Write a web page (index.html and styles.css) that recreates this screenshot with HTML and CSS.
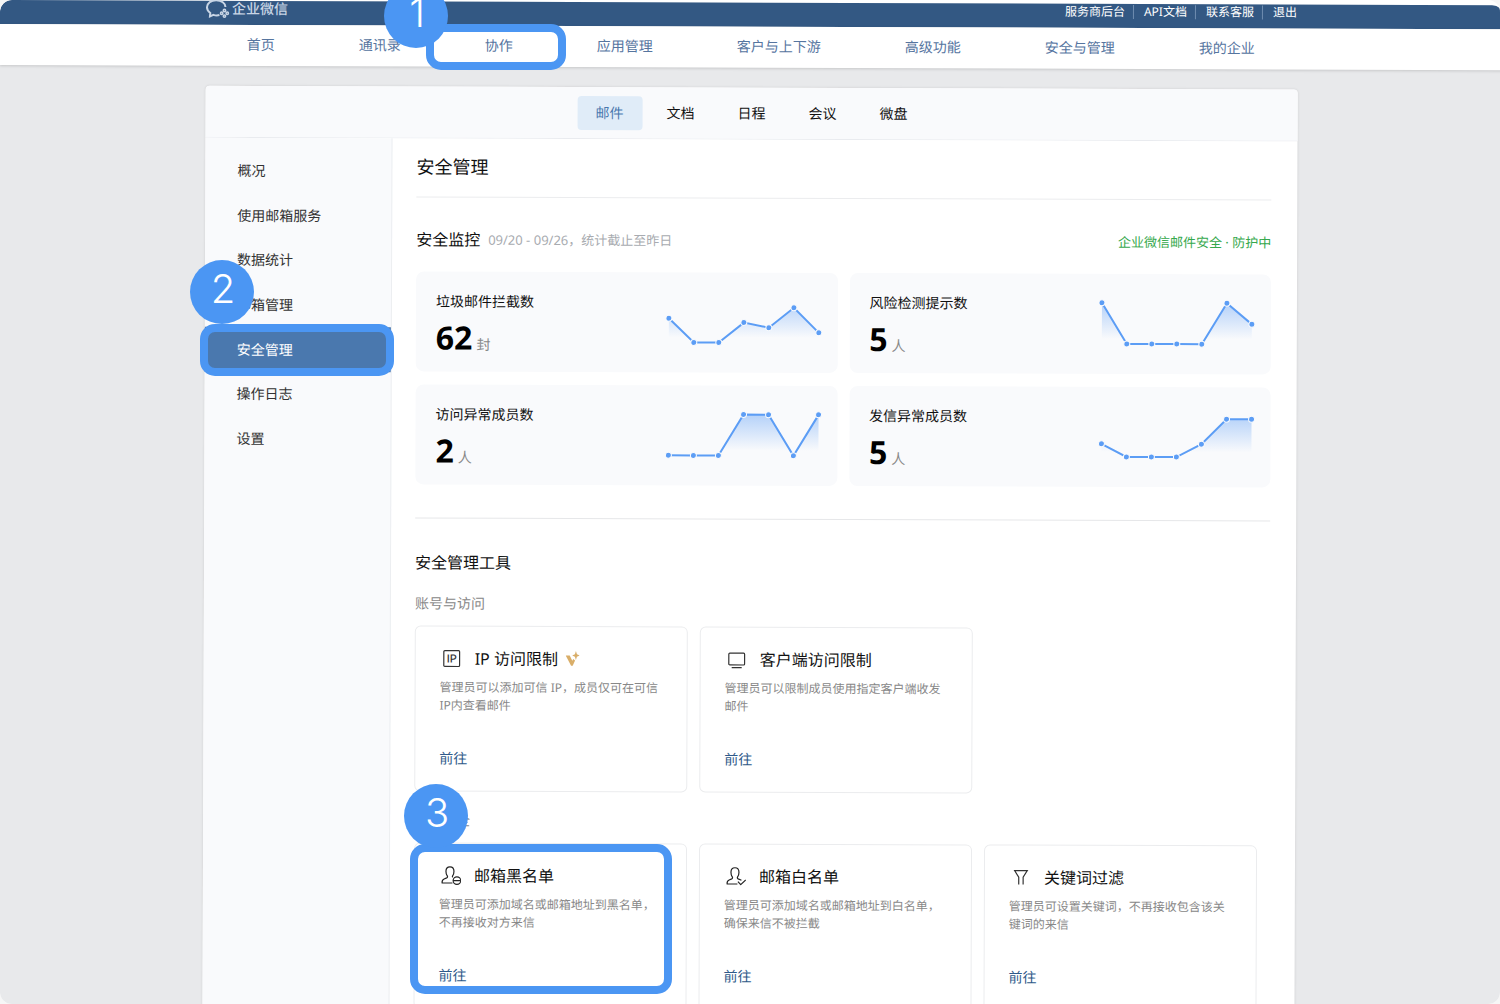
FILE: index.html
```html
<!DOCTYPE html>
<html lang="zh-CN">
<head>
<meta charset="utf-8">
<meta name="viewport" content="width=device-width, initial-scale=1">
<title>企业微信 - 安全管理</title>
<link rel="stylesheet" href="styles.css">
</head>
<body>
<div class="stage">
  <div class="screen">
    <header class="topbar">
      <div class="wrap topbar-inner">
        <a class="logo" href="#">
          <svg width="24" height="20" viewBox="0 0 24 20" fill="none" stroke="currentColor" stroke-width="2" aria-hidden="true">
            <path d="M13.500 16.300c-2.300.6-4.300.4-6-.2L4 17.600l.3-3.300C2.200 12.700 1 10.700 1 8.500 1 4.500 5 1.500 10.200 1.500s9.300 3 9.300 6.800"/>
            <g stroke-width="1.500"><circle cx="18.500" cy="11.700" r="1.200"/><circle cx="15.700" cy="14.500" r="1.200"/><circle cx="21.300" cy="14.500" r="1.200"/><circle cx="18.500" cy="17.300" r="1.200"/></g>
          </svg>
          <span>企业微信</span>
        </a>
        <nav class="toplinks">
          <a href="#">服务商后台</a>
          <a href="#">API文档</a>
          <a href="#">联系客服</a>
          <a href="#">退出</a>
        </nav>
      </div>
    </header>
    <nav class="mainnav">
      <div class="wrap mainnav-inner">
        <a href="#">首页</a>
        <a href="#">通讯录</a>
        <a href="#">协作</a>
        <a href="#">应用管理</a>
        <a href="#">客户与上下游</a>
        <a href="#">高级功能</a>
        <a href="#">安全与管理</a>
        <a href="#">我的企业</a>
      </div>
    </nav>

    <div class="wrap panel">
      <nav class="tabs">
        <a class="tab active" href="#">邮件</a>
        <a class="tab" href="#">文档</a>
        <a class="tab" href="#">日程</a>
        <a class="tab" href="#">会议</a>
        <a class="tab" href="#">微盘</a>
      </nav>
      <div class="body">
        <aside class="sidebar">
          <nav class="menu">
            <a href="#">概况</a>
            <a href="#">使用邮箱服务</a>
            <a href="#">数据统计</a>
            <a href="#">邮箱管理</a>
            <a class="active" href="#">安全管理</a>
            <a href="#">操作日志</a>
            <a href="#">设置</a>
          </nav>
        </aside>
        <main class="content">
          <h1>安全管理</h1>

          <section class="monitor">
            <div class="section-head">
              <h2>安全监控</h2>
              <span class="period">09/20 - 09/26，统计截止至昨日</span>
              <span class="guard">企业微信邮件安全 · 防护中</span>
            </div>
            <svg class="defs" width="0" height="0" aria-hidden="true">
              <defs>
                <linearGradient id="fade" gradientUnits="userSpaceOnUse" x1="0" y1="4" x2="0" y2="41">
                  <stop offset="0" stop-color="#5c9df5" stop-opacity=".45"/>
                  <stop offset="1" stop-color="#5c9df5" stop-opacity="0"/>
                </linearGradient>
                <marker id="dot" viewBox="0 0 8 8" refX="4" refY="4" markerWidth="8" markerHeight="8" markerUnits="userSpaceOnUse">
                  <circle cx="4" cy="4" r="3" fill="#5c9df5" stroke="#f9fafc" stroke-width="1"/>
                </marker>
              </defs>
            </svg>
            <div class="stats">
              <article class="stat">
                <div>
                  <h3>垃圾邮件拦截数</h3>
                  <p><strong>62</strong><span>封</span></p>
                </div>
                <svg class="chart" width="160" height="56" viewBox="0 0 160 56">
                  <path class="area" d="M5 22L30 46H55L80 26L105 31L130 11L155 36V46H5Z"/>
                  <polyline class="line" points="5,22 30,46 55,46 80,26 105,31 130,11 155,36"/>
                </svg>
              </article>
              <article class="stat">
                <div>
                  <h3>风险检测提示数</h3>
                  <p><strong>5</strong><span>人</span></p>
                </div>
                <svg class="chart" width="160" height="56" viewBox="0 0 160 56">
                  <path class="area" d="M5 5L30 46H105L130 5L155 26V46H5Z"/>
                  <polyline class="line" points="5,5 30,46 55,46 80,46 105,46 130,5 155,26"/>
                </svg>
              </article>
              <article class="stat">
                <div>
                  <h3>访问异常成员数</h3>
                  <p><strong>2</strong><span>人</span></p>
                </div>
                <svg class="chart" width="160" height="56" viewBox="0 0 160 56">
                  <path class="area" d="M5 46H55L80 5H105L130 46L155 5V46Z"/>
                  <polyline class="line" points="5,46 30,46 55,46 80,5 105,5 130,46 155,5"/>
                </svg>
              </article>
              <article class="stat">
                <div>
                  <h3>发信异常成员数</h3>
                  <p><strong>5</strong><span>人</span></p>
                </div>
                <svg class="chart" width="160" height="56" viewBox="0 0 160 56">
                  <path class="area" d="M5 33L30 46H80L105 33L130 8H155V46H5Z"/>
                  <polyline class="line" points="5,33 30,46 55,46 80,46 105,33 130,8 155,8"/>
                </svg>
              </article>
            </div>
          </section>

          <section class="toolbox">
            <h2>安全管理工具</h2>
            <h3 class="group">账号与访问</h3>
            <div class="tools">
              <article class="tool">
                <h4>
                  <svg width="20" height="20" viewBox="0 0 20 20" fill="none" stroke="#333" stroke-width="1.200" aria-hidden="true">
                    <rect x="2.100" y="2.100" width="15.800" height="15.800" rx="1"/>
                    <text class="ip" x="10" y="14" text-anchor="middle">IP</text>
                  </svg>
                  <span>IP 访问限制</span>
                  <svg class="spark" width="14" height="16" viewBox="0 0 14 16" fill="#d9ae69" aria-hidden="true">
                    <path d="M0 4.500h4l2.600 5.300.9-1.800 1.900 1.500L7 14.800H5.400Z"/>
                    <path d="M10.200 0l1 3.200L14 4.500l-2.800 1.300-1 3.200-1-3.200-2.700-1.300 2.700-1.300Z"/>
                  </svg>
                </h4>
                <p>管理员可以添加可信 IP，成员仅可在可信IP内查看邮件</p>
                <a href="#">前往</a>
              </article>
              <article class="tool">
                <h4>
                  <svg width="20" height="20" viewBox="0 0 20 20" fill="none" stroke="#333" stroke-width="1.200" aria-hidden="true">
                    <rect x="2.100" y="3.600" width="15.800" height="11.800" rx="1"/>
                    <path d="M5 18h10"/>
                  </svg>
                  <span>客户端访问限制</span>
                </h4>
                <p>管理员可以限制成员使用指定客户端收发邮件</p>
                <a href="#">前往</a>
              </article>
            </div>
            <h3 class="group">邮件安全</h3>
            <div class="tools">
              <article class="tool">
                <h4>
                  <svg width="20" height="20" viewBox="0 0 20 20" fill="none" stroke="#222" stroke-width="1.200" stroke-linejoin="round" aria-hidden="true">
                    <path d="M11.500 17.400H1.200c-.3-2.300.5-3.300 2-4l2.600-1.100c1-.5 1-1.300.4-2.200C5.300 8.800 5 7.300 5 5.700 5 3 6.600 1.200 9 1.200S13 3 13 5.700c0 1.600-.3 3.100-1.200 4.400-.5.7-.5 1.200-.1 1.700"/>
                    <circle cx="16" cy="15" r="3.800"/><path d="M12.200 15h7.600"/>
                  </svg>
                  <span>邮箱黑名单</span>
                </h4>
                <p>管理员可添加域名或邮箱地址到黑名单，不再接收对方来信</p>
                <a href="#">前往</a>
              </article>
              <article class="tool">
                <h4>
                  <svg width="20" height="20" viewBox="0 0 20 20" fill="none" stroke="#222" stroke-width="1.200" stroke-linejoin="round" aria-hidden="true">
                    <path d="M11.500 17.400H1.200c-.3-2.300.5-3.300 2-4l2.600-1.100c1-.5 1-1.300.4-2.200C5.300 8.800 5 7.300 5 5.700 5 3 6.600 1.200 9 1.200S13 3 13 5.700c0 1.600-.3 3.100-1.200 4.400-.6.900-.6 1.700.4 2.200l3.300 1.400"/>
                    <path d="M12 15l2.800 3 5-4.700"/>
                  </svg>
                  <span>邮箱白名单</span>
                </h4>
                <p>管理员可添加域名或邮箱地址到白名单，确保来信不被拦截</p>
                <a href="#">前往</a>
              </article>
              <article class="tool">
                <h4>
                  <svg width="20" height="20" viewBox="0 0 20 20" fill="none" stroke="#333" stroke-width="1.200" aria-hidden="true">
                    <path d="M7.800 17V9.700L3.700 3.100h12.600l-4.100 6.600V17"/>
                  </svg>
                  <span>关键词过滤</span>
                </h4>
                <p>管理员可设置关键词，不再接收包含该关键词的来信</p>
                <a href="#">前往</a>
              </article>
            </div>
          </section>
        </main>
      </div>
    </div>
  </div>

  <div class="frame frame-1"></div>
  <div class="frame frame-2"></div>
  <div class="frame frame-3"></div>
  <div class="step step-1">1</div>
  <div class="step step-2">2</div>
  <div class="step step-3">3</div>
</div>
</body>
</html>
```
FILE: styles.css
```css
* { box-sizing: border-box; }

body, h1, h2, h3, h4, p { margin: 0; font-weight: 400; }

body {
  background: #f6f6f6;
  color: #111;
  font: 14px/20px "Noto Sans", "Noto Sans CJK SC", sans-serif;
}

a { color: inherit; text-decoration: none; }

.stage {
  position: relative;
  height: 100vh;
  overflow: hidden;
  border-radius: 12px;
  background: #fff;
}

/* the console sits slightly tilted under the step markers */
.screen {
  min-height: 100%;
  margin-right: -4px;
  border-radius: 12px 12px 0 0;
  background: #e8e9eb;
  transform: rotate(0.2deg);
  transform-origin: 0 0;
}

.wrap { max-width: 1092px; margin: 0 auto; }

.topbar {
  height: 24px;
  border-radius: 12px 12px 0 0;
  background: #335883;
}

.topbar-inner {
  display: flex;
  align-items: center;
  justify-content: space-between;
  height: 16px;
}

.logo {
  display: flex;
  align-items: center;
  gap: 2px;
  color: #c8d5e5;
  font-weight: 500;
}

.toplinks {
  display: flex;
  padding-right: 1px;
  color: #fff;
  font-size: 12px;
  line-height: 14px;
}
.toplinks a + a {
  margin-left: 8px;
  padding-left: 10px;
  border-left: 1px solid #6f8db0;
}

.mainnav {
  background: #fff;
  box-shadow: 0 1px 3px rgba(0, 0, 0, .15);
}

.mainnav-inner {
  display: flex;
  gap: 84px;
  padding: 0 41px 1px;
  color: #56759f;
  line-height: 40px;
  white-space: nowrap;
}

.panel {
  margin-top: 20px;
  border-radius: 4px 4px 0 0;
  background: #fff;
  box-shadow: 0 0 3px rgba(0, 0, 0, .12);
}

.tabs {
  display: flex;
  align-items: center;
  justify-content: center;
  gap: 6px;
  height: 52px;
  border-bottom: 1px solid #e9ebef;
  border-radius: 4px 4px 0 0;
  background: #f9fafc;
}

.tab {
  width: 65px;
  border-radius: 4px;
  line-height: 34px;
  text-align: center;
}
.tab.active { background: #e0ecf8; color: #4a78ae; }

.body { display: grid; grid-template-columns: 187px 1fr; }

.sidebar {
  padding-top: 11px;
  border-right: 1px solid #eceef1;
  background: #f9fafc;
  color: #333;
}

.menu { display: flex; flex-direction: column; height: 312px; }
.menu a {
  display: flex;
  flex: 1;
  align-items: center;
  padding-left: 32px;
}
.menu .active { background: #4a78ae; color: #fff; }

.content { padding: 16px 26px 40px 24px; }

h1 {
  padding-bottom: 18px;
  border-bottom: 1px solid #ebecee;
  font-size: 18px;
  line-height: 24px;
}

h2 { font-size: 16px; line-height: 24px; }

.monitor {
  padding: 30px 0 33px;
  border-bottom: 1px solid #e6e7e9;
}

.section-head {
  display: flex;
  align-items: center;
  gap: 8px;
  margin-bottom: 20px;
}

.period { color: #a8abb0; font-size: 13px; }
.guard { margin-left: auto; color: #35a84c; font-size: 13px; }

.defs { position: absolute; }

.stats {
  display: grid;
  grid-template-columns: 1fr 1fr;
  gap: 13px 12px;
}

.stat {
  display: flex;
  justify-content: space-between;
  height: 100px;
  padding: 20px 14px 0 20px;
  border-radius: 8px;
  background: #f9fafc;
}

.stat h3 { font-size: 14px; line-height: 20px; }
.stat p { display: flex; align-items: baseline; gap: 4px; line-height: 52px; }
.stat strong { color: #000; font-size: 32px; }
.stat span { color: #888; }

.chart { margin-top: 4px; }
.area { fill: url(#fade); }
.line {
  fill: none;
  stroke: #5c9df5;
  stroke-width: 2;
  marker-start: url(#dot);
  marker-mid: url(#dot);
  marker-end: url(#dot);
}

.toolbox { padding-top: 32px; }

.group {
  margin: 19px 0 12px;
  color: #888;
  font-size: 14px;
  line-height: 20px;
}

.tools {
  display: grid;
  grid-template-columns: repeat(3, 1fr);
  gap: 12px;
  padding-right: 12px;
}

.tool {
  display: flex;
  flex-direction: column;
  height: 166px;
  padding: 20px 24px 22px;
  border: 1px solid #ebecee;
  border-radius: 6px;
}

.tool h4 {
  display: flex;
  align-items: center;
  padding-left: 2px;
  font-size: 16px;
  line-height: 24px;
}
.tool h4 span { margin-left: 13px; }
.tool .spark { margin-left: 8px; }
.tool p { margin-top: 8px; color: #888; font-size: 12px; line-height: 18px; }
.tool a { margin-top: auto; color: #2f5a8a; }

.ip {
  fill: #333;
  stroke: none;
  font: 500 11px Inter, sans-serif;
}

/* numbered step markers laid over the console */
.frame {
  position: absolute;
  border: 8px solid #4b96f3;
  border-radius: 15px;
}
.frame-1 { left: 426px; top: 24px; width: 140px; height: 46px; }
.frame-2 { left: 200px; top: 324px; width: 194px; height: 52px; }
.frame-3 { left: 410px; top: 844px; width: 262px; height: 150px; }

.step {
  position: absolute;
  width: 64px;
  height: 64px;
  padding-left: 2px;
  border-radius: 50%;
  background: #4b96f3;
  color: #fff;
  font: 300 40px/58px Inter, sans-serif;
  text-align: center;
}
.step-1 { left: 384px; top: -16px; }
.step-2 { left: 190px; top: 260px; }
.step-3 { left: 404px; top: 784px; }
```
